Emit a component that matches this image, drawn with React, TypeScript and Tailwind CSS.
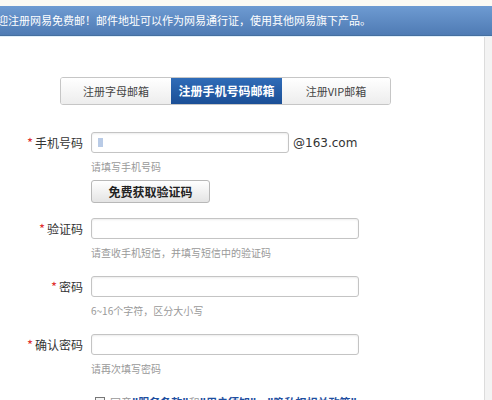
const cjk = "font-['Noto_Sans_CJK_SC','Noto_Sans',sans-serif]";

const fields = [
  { label: "验证码", hint: "请查收手机短信，并填写短信中的验证码" },
  { label: "密码", hint: "6~16个字符，区分大小写" },
  { label: "确认密码", hint: "请再次填写密码" },
];

const inputClass =
  "h-[21px] rounded-[3px] border border-[#c4c4c4] bg-white shadow-[inset_0_1px_2px_rgba(0,0,0,0.08)]";

const Label = ({ text }: { text: string }) => (
  <div className="flex w-[83px] shrink-0 items-center justify-end gap-[2px] pr-0 text-[12px] text-[#333]">
    <span className="text-[13px] leading-none text-[#e03030]">*</span>
    <span>{text}</span>
  </div>
);

export default function App() {
  return (
    <div className={`relative h-[400px] w-[492px] overflow-hidden bg-white ${cjk}`}>
      <div className="h-[6px] bg-[#fbfaf4]" />
      <div className="flex h-[30px] items-center overflow-hidden whitespace-nowrap border-b border-[#456f9f] bg-gradient-to-b from-[#6e9bd2] to-[#4f7bb4] pl-0 text-[11px] text-white">
        <span className="-ml-[3px]">
          迎注册网易免费邮！邮件地址可以作为网易通行证，使用其他网易旗下产品。
        </span>
      </div>
      <div className="h-px bg-[#dfeefa]" />

      <div className="flex">
        <div className="flex-1">
          <div className="ml-[60px] mt-[40px] flex h-[28px] w-[331px] overflow-hidden rounded-[3px] border border-[#c6c6c6] text-[11px]">
            <div className="flex w-[110px] items-center justify-center bg-gradient-to-b from-white to-[#ededed] text-[#444]">
              注册字母邮箱
            </div>
            <div className="flex w-[111px] items-center justify-center bg-gradient-to-b from-[#2f6cb8] to-[#1b4f96] text-[12px] font-bold text-white">
              注册手机号码邮箱
            </div>
            <div className="flex flex-1 items-center justify-center bg-gradient-to-b from-white to-[#ededed] text-[#444]">
              注册VIP邮箱
            </div>
          </div>

          <div className="mt-[27px]">
            <div className="flex items-center gap-[8px]">
              <Label text="手机号码" />
              <div className={`${inputClass} relative w-[198px]`}>
                <div className="absolute left-[6px] top-[5px] h-[9px] w-[5px] bg-[#b9cbe6]" />
              </div>
              <span className="-ml-[4px] font-['DejaVu_Sans',sans-serif] text-[12px] text-[#333]">
                @163.com
              </span>
            </div>
            <div className="ml-[91px] mt-[9px] text-[10px] leading-[10px] text-[#999]">
              请填写手机号码
            </div>
            <button className="ml-[91px] mt-[8px] flex h-[23px] w-[119px] items-center justify-center rounded-[3px] border border-[#b8b8b8] bg-gradient-to-b from-white to-[#e4e4e4] text-[12px] font-bold text-[#222]">
              免费获取验证码
            </button>

            {fields.map((f, i) => (
              <div key={f.label} className={i === 0 ? "mt-[15px]" : "mt-[18px]"}>
                <div className="flex items-center gap-[8px]">
                  <Label text={f.label} />
                  <div className={`${inputClass} w-[268px]`} />
                </div>
                <div className="ml-[91px] mt-[9px] text-[10px] leading-[10px] text-[#999]">
                  {f.hint}
                </div>
              </div>
            ))}

            <div className="ml-[95px] mt-[20px] flex items-center gap-[5px] text-[11px]">
              <span className="h-[10px] w-[10px] border border-[#777] bg-[#f4f4f4]" />
              <span className="text-[#999]">
                同意
                <b className="text-[#1f4fa0]">"服务条款"</b>和
                <b className="text-[#1f4fa0]">"用户须知"</b>、
                <b className="text-[#1f4fa0]">"隐私权相关政策"</b>
              </span>
            </div>
          </div>
        </div>
        <div className="h-[400px] w-[8px] border-l border-[#dcdcdc] bg-[#f3f3f3]" />
      </div>
    </div>
  );
}
